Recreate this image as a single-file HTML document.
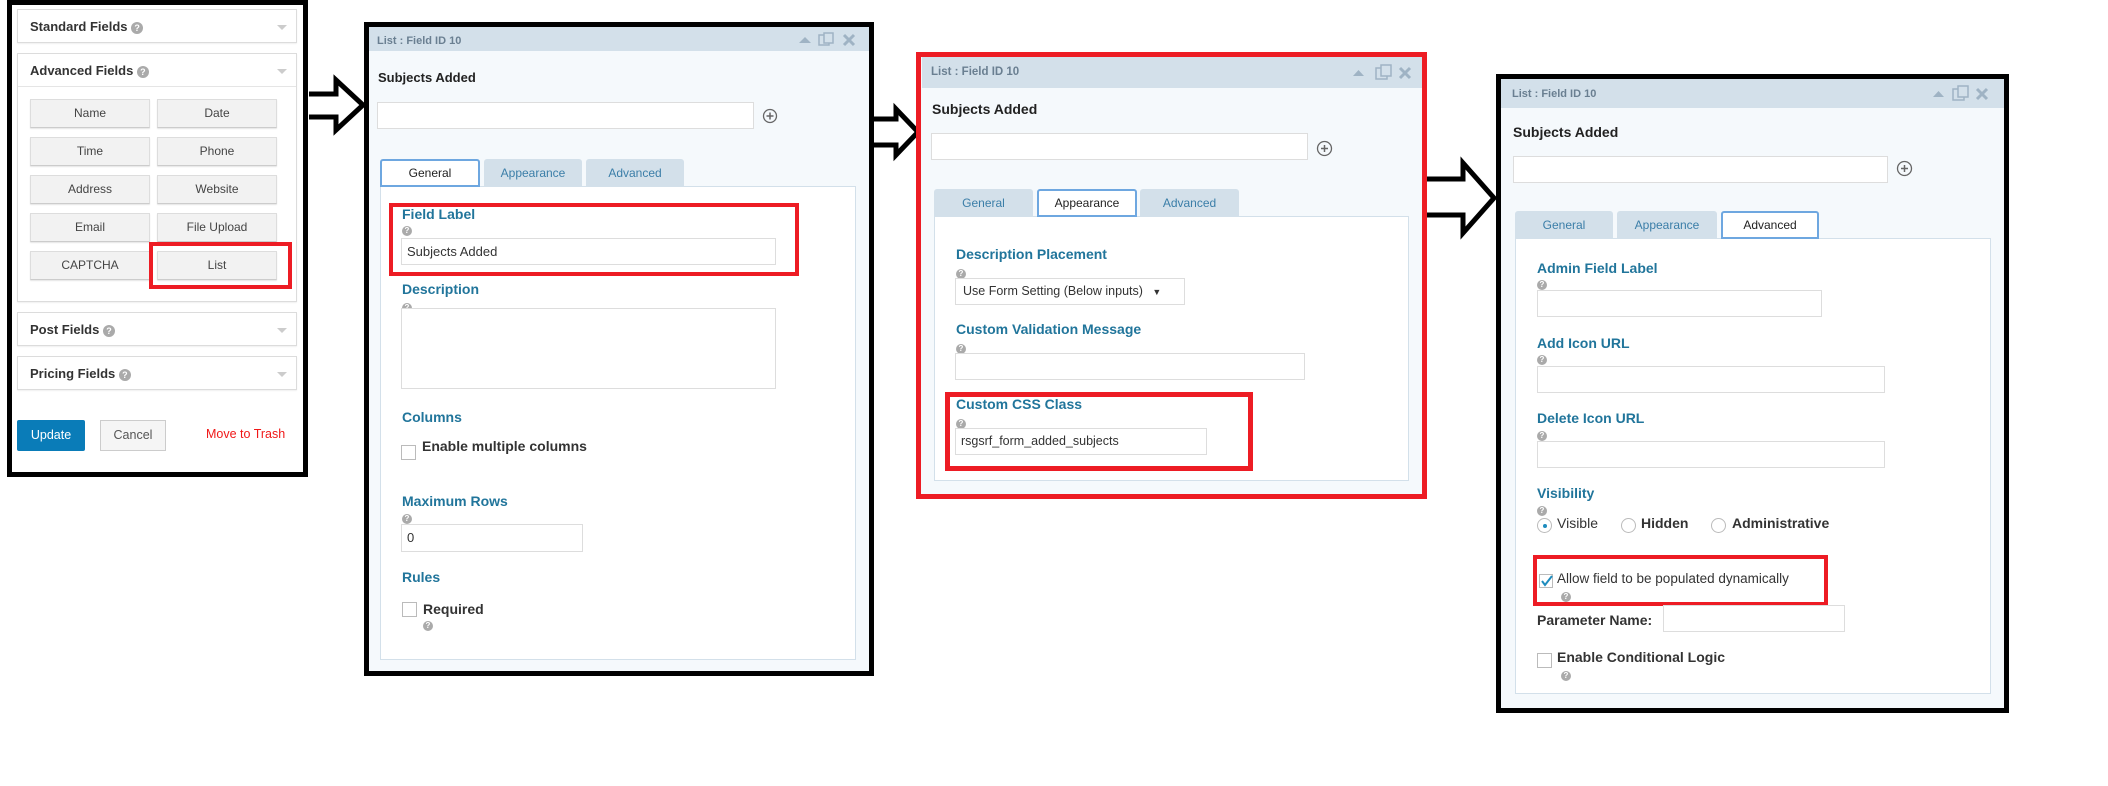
<!DOCTYPE html>
<html><head><meta charset="utf-8"><style>
*{box-sizing:border-box;margin:0;padding:0}
body{width:2108px;height:786px;background:#fff;position:relative;overflow:hidden;font-family:"Liberation Sans",sans-serif}
.a{position:absolute}
.blk{position:absolute;border:5px solid #000}
.red{position:absolute;border:4px solid #ed1c24}
.box{position:absolute;border:1px solid #dcdcdc;background:#fff;box-shadow:0 1px 1px rgba(0,0,0,.06)}
.sh{position:absolute;font-weight:bold;font-size:13px;color:#333;left:17px}
.hq{display:inline-block;width:12px;height:12px;border-radius:50%;background:#aaa;color:#fff;font-size:9px;text-align:center;line-height:12px;vertical-align:0px}
.car{position:absolute;width:0;height:0;border-left:5px solid transparent;border-right:5px solid transparent;border-top:5px solid #ccc}
.btn{position:absolute;width:120px;height:29px;background:#f2f2f2;border:1px solid #ddd;border-bottom-color:#ccc;font-size:12px;color:#444;text-align:center;line-height:27px;box-shadow:0 1px 1px rgba(0,0,0,.1)}
.hd{position:absolute;background:#d3e0ea}
.ttl{position:absolute;font-size:11px;font-weight:bold;color:#6a7f91}
.sub{position:absolute;font-weight:bold;color:#222}
.inp{position:absolute;border:1px solid #ddd;background:#fff;font-size:12px;color:#333;padding-left:5px}
.tab{position:absolute;background:#d3e0ea;color:#3b7ea8;font-size:12px;text-align:center;border-radius:3px 3px 0 0}
.tab.on{background:#fff;border:2px solid #6ea7e0;color:#222}
.pan{position:absolute;background:#fff;border:1px solid #d3e0ea}
.lb{position:absolute;font-weight:bold;color:#21759b;font-size:14px}
.q{position:absolute;width:10px;height:10px;border-radius:50%;background:#aaa;color:#fff;font-size:8px;font-weight:bold;text-align:center;line-height:10px}
.cb{position:absolute;width:15px;height:15px;border:1px solid #bbb;background:#fff}
.tx{position:absolute;font-size:14px;font-weight:bold;color:#333}
.rd{position:absolute;width:15px;height:15px;border-radius:50%;border:1px solid #bbb;background:#fff}
</style></head><body>

<!-- PANEL 1 -->
<div class="blk" style="left:7px;top:0;width:301px;height:477px"></div>
<div class="box" style="left:17px;top:9px;width:280px;height:34px"><div class="sh" style="left:12px;top:9px">Standard Fields <span class="hq">?</span></div><div class="car" style="left:259px;top:15px"></div></div>
<div class="box" style="left:17px;top:53px;width:280px;height:249px"><div class="sh" style="left:12px;top:9px">Advanced Fields <span class="hq">?</span></div><div class="car" style="left:259px;top:15px"></div><div class="a" style="left:0;top:32px;width:278px;border-top:1px solid #e5e5e5"></div></div>
<div class="btn" style="left:30px;top:99px">Name</div><div class="btn" style="left:157px;top:99px">Date</div>
<div class="btn" style="left:30px;top:137px">Time</div><div class="btn" style="left:157px;top:137px">Phone</div>
<div class="btn" style="left:30px;top:175px">Address</div><div class="btn" style="left:157px;top:175px">Website</div>
<div class="btn" style="left:30px;top:213px">Email</div><div class="btn" style="left:157px;top:213px">File Upload</div>
<div class="btn" style="left:30px;top:251px">CAPTCHA</div><div class="btn" style="left:157px;top:251px">List</div>
<div class="red" style="left:149px;top:242px;width:143px;height:47px"></div>
<div class="box" style="left:17px;top:312px;width:280px;height:34px"><div class="sh" style="left:12px;top:9px">Post Fields <span class="hq">?</span></div><div class="car" style="left:259px;top:15px"></div></div>
<div class="box" style="left:17px;top:356px;width:280px;height:34px"><div class="sh" style="left:12px;top:9px">Pricing Fields <span class="hq">?</span></div><div class="car" style="left:259px;top:15px"></div></div>
<div class="a" style="left:17px;top:420px;width:68px;height:31px;background:#0a7cb8;border-radius:2px;color:#fff;font-size:12.5px;text-align:center;line-height:30px">Update</div>
<div class="a" style="left:100px;top:420px;width:66px;height:31px;background:#f5f5f5;border:1px solid #ccc;color:#555;font-size:12.5px;text-align:center;line-height:29px">Cancel</div>
<div class="a" style="left:206px;top:427px;color:#f01818;font-size:12.5px">Move to Trash</div>

<!-- arrows -->
<svg class="a" style="left:0;top:0" width="2108" height="786">
<path d="M309 94 H336 V80 L363 105 L336 130 V117 H309" fill="#fff" stroke="#000" stroke-width="5"/>
<path d="M872 119 H896 V109 L918 132 L896 155 V145 H872" fill="#fff" stroke="#000" stroke-width="5"/>
<path d="M1426 179 H1463 V163 L1494 198 L1463 233 V215 H1426" fill="#fff" stroke="#000" stroke-width="5"/>
</svg>

<!-- PANEL 2 -->
<div class="blk" style="left:364px;top:22px;width:510px;height:654px;background:#f5f9fc"></div>
<div class="hd" style="left:369px;top:27px;width:500px;height:24px"></div>
<div class="ttl" style="left:377px;top:35px">List : Field ID 10</div>
<svg class="a" style="left:798px;top:32px" width="64" height="16"><path d="M1 11 L7 5 L13 11Z" fill="#9fb3c4"/><rect x="21" y="3" width="10" height="10" fill="none" stroke="#9fb3c4" stroke-width="1.5"/><rect x="26" y="1" width="9" height="10" fill="#d3e0ea" stroke="#9fb3c4" stroke-width="1.5"/><path d="M46 3 L56 13 M56 3 L46 13" stroke="#9fb3c4" stroke-width="3"/></svg>
<div class="sub" style="left:378px;top:70px;font-size:13px">Subjects Added</div>
<div class="inp" style="left:377px;top:102px;width:377px;height:27px"></div>
<svg class="a" style="left:762px;top:108px" width="16" height="16"><circle cx="8" cy="8" r="6.5" fill="none" stroke="#666" stroke-width="1.3"/><path d="M4.5 8H11.5M8 4.5V11.5" stroke="#666" stroke-width="1.5"/></svg>
<div class="pan" style="left:380px;top:186px;width:476px;height:474px"></div>
<div class="tab on" style="left:380px;top:159px;width:100px;height:28px;line-height:24px">General</div>
<div class="tab" style="left:484px;top:159px;width:98px;height:28px;line-height:28px">Appearance</div>
<div class="tab" style="left:586px;top:159px;width:98px;height:28px;line-height:28px">Advanced</div>
<div class="red" style="left:389px;top:203px;width:410px;height:73px"></div>
<div class="lb" style="left:402px;top:206px">Field Label</div><div class="q" style="left:402px;top:226px">?</div>
<div class="inp" style="left:401px;top:238px;width:375px;height:27px;line-height:25px;font-size:13px">Subjects Added</div>
<div class="lb" style="left:402px;top:281px">Description</div><div class="q" style="left:402px;top:303px">?</div>
<div class="inp" style="left:401px;top:308px;width:375px;height:81px"></div>
<div class="lb" style="left:402px;top:409px">Columns</div>
<div class="cb" style="left:401px;top:445px"></div><div class="tx" style="left:422px;top:438px">Enable multiple columns</div>
<div class="lb" style="left:402px;top:493px">Maximum Rows</div><div class="q" style="left:402px;top:514px">?</div>
<div class="inp" style="left:401px;top:524px;width:182px;height:28px;line-height:26px;font-size:13px">0</div>
<div class="lb" style="left:402px;top:569px">Rules</div>
<div class="cb" style="left:402px;top:602px"></div><div class="tx" style="left:423px;top:601px">Required</div><div class="q" style="left:423px;top:621px">?</div>

<!-- PANEL 3 -->
<div class="a" style="left:916px;top:52px;width:511px;height:447px;border:5px solid #ed1c24;background:#f5f9fc"></div>
<div class="hd" style="left:922px;top:57px;width:500px;height:31px"></div>
<div class="ttl" style="left:931px;top:66px;font-size:11.5px">List : Field ID 10</div>
<svg class="a" style="left:1352px;top:64px" width="66" height="18"><path d="M1 12 L6.5 6 L12 12Z" fill="#9fb3c4"/><rect x="24" y="4" width="11" height="11" fill="none" stroke="#9fb3c4" stroke-width="1.5"/><rect x="29" y="1" width="10" height="11" fill="#d3e0ea" stroke="#9fb3c4" stroke-width="1.5"/><path d="M48 4 L58 14 M58 4 L48 14" stroke="#9fb3c4" stroke-width="3"/></svg>
<div class="sub" style="left:932px;top:101px;font-size:14px">Subjects Added</div>
<div class="inp" style="left:931px;top:133px;width:377px;height:27px"></div>
<svg class="a" style="left:1316px;top:140px" width="17" height="17"><circle cx="8.5" cy="8.5" r="7" fill="none" stroke="#666" stroke-width="1.3"/><path d="M5 8.5H12M8.5 5V12" stroke="#666" stroke-width="1.5"/></svg>
<div class="pan" style="left:934px;top:216px;width:475px;height:265px"></div>
<div class="tab" style="left:934px;top:189px;width:99px;height:28px;line-height:28px">General</div>
<div class="tab on" style="left:1037px;top:189px;width:100px;height:28px;line-height:24px">Appearance</div>
<div class="tab" style="left:1140px;top:189px;width:99px;height:28px;line-height:28px">Advanced</div>
<div class="lb" style="left:956px;top:246px">Description Placement</div><div class="q" style="left:956px;top:269px">?</div>
<div class="inp" style="left:955px;top:278px;width:230px;height:27px;line-height:25px;font-size:12.5px;padding-left:7px">Use Form Setting (Below inputs) <span style="font-size:9px;margin-left:6px">▼</span></div>
<div class="lb" style="left:956px;top:321px">Custom Validation Message</div><div class="q" style="left:956px;top:344px">?</div>
<div class="inp" style="left:955px;top:353px;width:350px;height:27px"></div>
<div class="red" style="left:945px;top:392px;width:308px;height:79px;border-width:5px"></div>
<div class="lb" style="left:956px;top:396px">Custom CSS Class</div><div class="q" style="left:956px;top:419px">?</div>
<div class="inp" style="left:955px;top:428px;width:252px;height:27px;line-height:25px;font-size:12.5px">rsgsrf_form_added_subjects</div>

<!-- PANEL 4 -->
<div class="blk" style="left:1496px;top:74px;width:513px;height:639px;background:#f5f9fc"></div>
<div class="hd" style="left:1501px;top:79px;width:503px;height:29px"></div>
<div class="ttl" style="left:1512px;top:88px">List : Field ID 10</div>
<svg class="a" style="left:1932px;top:85px" width="64" height="18"><path d="M1 12 L6.5 6 L12 12Z" fill="#9fb3c4"/><rect x="21" y="4" width="11" height="11" fill="none" stroke="#9fb3c4" stroke-width="1.5"/><rect x="26" y="1" width="10" height="11" fill="#d3e0ea" stroke="#9fb3c4" stroke-width="1.5"/><path d="M45 4 L55 14 M55 4 L45 14" stroke="#9fb3c4" stroke-width="3"/></svg>
<div class="sub" style="left:1513px;top:124px;font-size:14px">Subjects Added</div>
<div class="inp" style="left:1513px;top:156px;width:375px;height:27px"></div>
<svg class="a" style="left:1896px;top:160px" width="17" height="17"><circle cx="8.5" cy="8.5" r="7" fill="none" stroke="#666" stroke-width="1.3"/><path d="M5 8.5H12M8.5 5V12" stroke="#666" stroke-width="1.5"/></svg>
<div class="pan" style="left:1515px;top:238px;width:476px;height:456px"></div>
<div class="tab" style="left:1515px;top:211px;width:98px;height:28px;line-height:28px">General</div>
<div class="tab" style="left:1617px;top:211px;width:100px;height:28px;line-height:28px">Appearance</div>
<div class="tab on" style="left:1721px;top:211px;width:98px;height:28px;line-height:24px">Advanced</div>
<div class="lb" style="left:1537px;top:260px">Admin Field Label</div><div class="q" style="left:1537px;top:280px">?</div>
<div class="inp" style="left:1537px;top:290px;width:285px;height:27px"></div>
<div class="lb" style="left:1537px;top:335px">Add Icon URL</div><div class="q" style="left:1537px;top:355px">?</div>
<div class="inp" style="left:1537px;top:366px;width:348px;height:27px"></div>
<div class="lb" style="left:1537px;top:410px">Delete Icon URL</div><div class="q" style="left:1537px;top:431px">?</div>
<div class="inp" style="left:1537px;top:441px;width:348px;height:27px"></div>
<div class="lb" style="left:1537px;top:485px">Visibility</div><div class="q" style="left:1537px;top:506px">?</div>
<div class="rd" style="left:1537px;top:518px"><div class="a" style="left:5px;top:5px;width:4px;height:4px;border-radius:50%;background:#1e8cbe"></div></div>
<div class="a" style="left:1557px;top:515px;font-size:14px;color:#333">Visible</div>
<div class="rd" style="left:1621px;top:518px"></div><div class="tx" style="left:1641px;top:515px">Hidden</div>
<div class="rd" style="left:1711px;top:518px"></div><div class="tx" style="left:1732px;top:515px">Administrative</div>
<div class="red" style="left:1533px;top:555px;width:295px;height:51px"></div>
<div class="cb" style="left:1539px;top:574px;width:14px;height:14px"><svg class="a" style="left:0;top:-1px" width="14" height="14"><path d="M2 7 L5 11 L12 2" fill="none" stroke="#1e8cbe" stroke-width="2"/></svg></div>
<div class="a" style="left:1557px;top:571px;font-size:13.5px;color:#333">Allow field to be populated dynamically</div>
<div class="q" style="left:1561px;top:592px">?</div>
<div class="tx" style="left:1537px;top:612px">Parameter Name:</div>
<div class="inp" style="left:1663px;top:605px;width:182px;height:27px"></div>
<div class="cb" style="left:1537px;top:653px"></div><div class="tx" style="left:1557px;top:649px">Enable Conditional Logic</div><div class="q" style="left:1561px;top:671px">?</div>
</body></html>
